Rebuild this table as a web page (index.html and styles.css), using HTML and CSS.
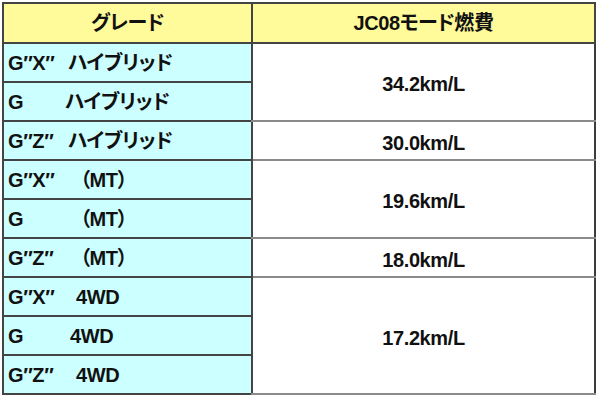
FILE: index.html
```html
<!DOCTYPE html>
<html lang="ja">
<head>
<meta charset="utf-8">
<link rel="stylesheet" href="styles.css">
</head>
<body>
<table class="spec">
  <thead>
    <tr class="head">
      <th class="c-grade">グレード</th>
      <th class="c-val">JC08モード燃費</th>
    </tr>
  </thead>
  <tbody>
    <tr>
      <td class="grade"><span class="pre hy">G″X″</span>ハイブリッド</td>
      <td class="val" rowspan="2">34.2km/L</td>
    </tr>
    <tr>
      <td class="grade"><span class="pre hyg">G</span>ハイブリッド</td>
    </tr>
    <tr>
      <td class="grade"><span class="pre hy">G″Z″</span>ハイブリッド</td>
      <td class="val">30.0km/L</td>
    </tr>
    <tr>
      <td class="grade"><span class="pre mt">G″X″</span>（MT）</td>
      <td class="val" rowspan="2">19.6km/L</td>
    </tr>
    <tr>
      <td class="grade"><span class="pre mt">G</span>（MT）</td>
    </tr>
    <tr>
      <td class="grade"><span class="pre mt">G″Z″</span>（MT）</td>
      <td class="val">18.0km/L</td>
    </tr>
    <tr>
      <td class="grade"><span class="pre wd">G″X″</span>4WD</td>
      <td class="val" rowspan="3">17.2km/L</td>
    </tr>
    <tr>
      <td class="grade"><span class="pre wdg">G</span>4WD</td>
    </tr>
    <tr>
      <td class="grade"><span class="pre wd">G″Z″</span>4WD</td>
    </tr>
  </tbody>
</table>
</body>
</html>
```
FILE: styles.css
```css
html, body {
  margin: 0;
  padding: 0;
  background: #ffffff;
}

body {
  font-family: "Liberation Sans", "Noto Sans CJK JP", sans-serif;
  color: #111111;
}

.spec {
  margin: 2px 0 0 2px;
  width: 594px;
  border-collapse: collapse;
  table-layout: fixed;
  border: 2px solid #3c3c3c;
  font-size: 20px;
  letter-spacing: -0.4px;
  font-weight: bold;
  font-feature-settings: "palt";
}

.spec th,
.spec td {
  padding: 0;
  border: 2px solid #444444;
  line-height: 1;
}

.head {
  height: 40px;
  background: #fffa9a;
}

.head th {
  text-align: center;
  font-weight: bold;
}

.c-grade {
  width: 247px;
}

.spec tbody tr {
  height: 39px;
}

.grade {
  background: #ccffff;
  text-align: left;
  padding-left: 4px !important;
  white-space: nowrap;
}

.val {
  background: #ffffff;
  text-align: center;
  border-color: #444444 #3c3c3c #8a8a8a #444444 !important;
  padding-top: 4px !important;
}

.pre {
  display: inline-block;
  font-weight: bold;
}

.hy { width: 60px; }
.hyg { width: 57px; }
.mt { width: 72px; }
.wd { width: 68px; }
.wdg { width: 62px; }
```
